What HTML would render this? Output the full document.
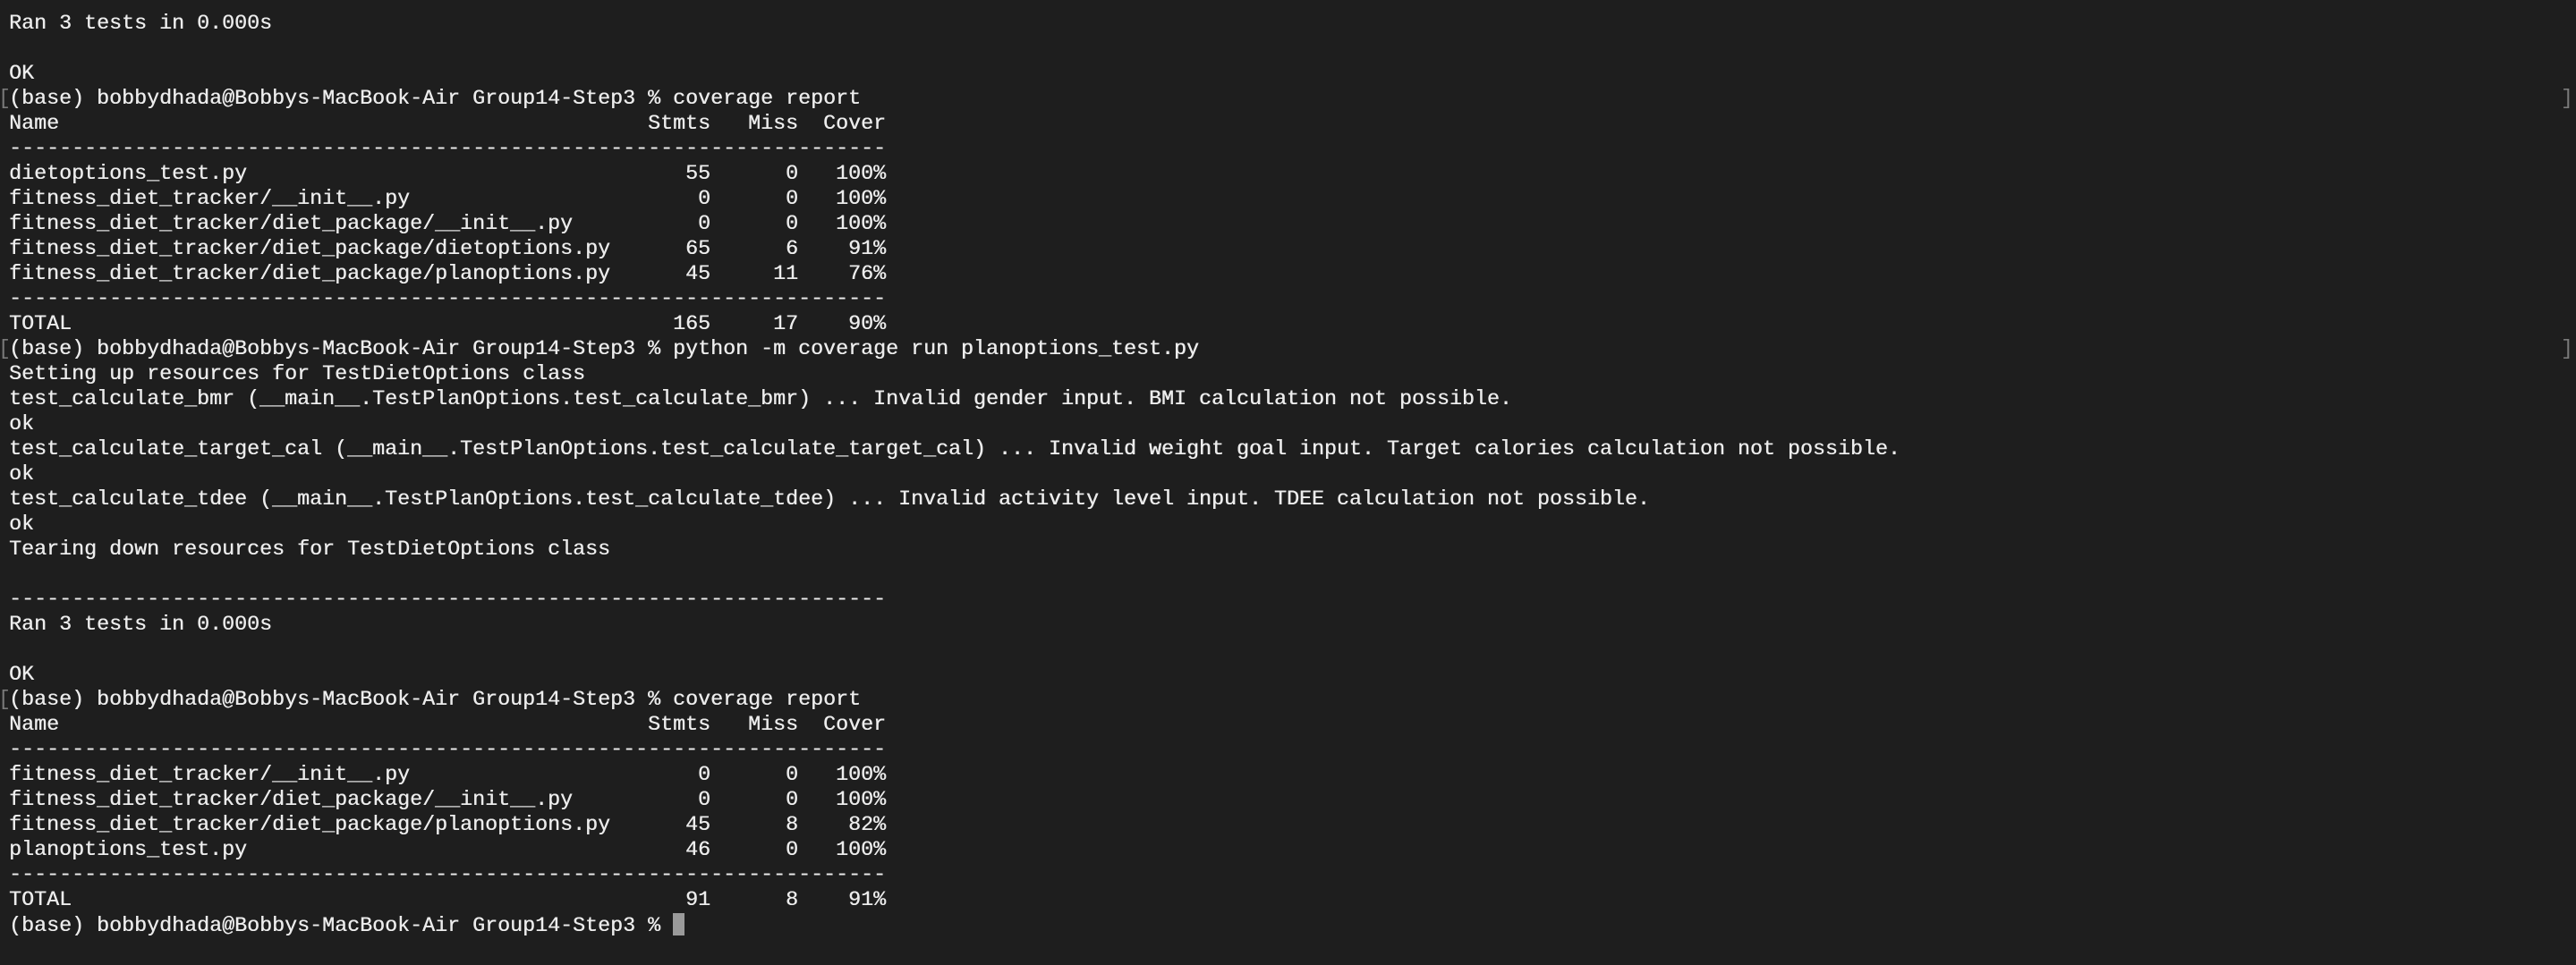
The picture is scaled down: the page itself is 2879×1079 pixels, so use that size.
<!DOCTYPE html>
<html><head><meta charset="utf-8"><style>
html,body{margin:0;padding:0;background:#1e1e1e;width:2879px;height:1079px;overflow:hidden}
pre{position:absolute;left:10px;top:13px;margin:0;font-family:"Liberation Mono",monospace;font-size:23.33px;line-height:28px;color:#ececec;letter-spacing:0;text-shadow:0.4px 0 0 #ececec}
.m{position:absolute;font-family:"Liberation Mono",monospace;font-size:23.33px;line-height:28px;color:#7a7a7a}
.cur{display:inline-block;width:13px;height:25px;background:#9a9a9a;vertical-align:-5px}
</style></head><body>
<div class="m" style="left:-2px;top:97px">[</div>
<div class="m" style="left:-2px;top:377px">[</div>
<div class="m" style="left:-2px;top:769px">[</div>
<div class="m" style="left:2862px;top:97px">]</div>
<div class="m" style="left:2862px;top:377px">]</div>
<pre>Ran 3 tests in 0.000s

OK
(base) bobbydhada@Bobbys-MacBook-Air Group14-Step3 % coverage report
Name                                               Stmts   Miss  Cover
----------------------------------------------------------------------
dietoptions_test.py                                   55      0   100%
fitness_diet_tracker/__init__.py                       0      0   100%
fitness_diet_tracker/diet_package/__init__.py          0      0   100%
fitness_diet_tracker/diet_package/dietoptions.py      65      6    91%
fitness_diet_tracker/diet_package/planoptions.py      45     11    76%
----------------------------------------------------------------------
TOTAL                                                165     17    90%
(base) bobbydhada@Bobbys-MacBook-Air Group14-Step3 % python -m coverage run planoptions_test.py
Setting up resources for TestDietOptions class
test_calculate_bmr (__main__.TestPlanOptions.test_calculate_bmr) ... Invalid gender input. BMI calculation not possible.
ok
test_calculate_target_cal (__main__.TestPlanOptions.test_calculate_target_cal) ... Invalid weight goal input. Target calories calculation not possible.
ok
test_calculate_tdee (__main__.TestPlanOptions.test_calculate_tdee) ... Invalid activity level input. TDEE calculation not possible.
ok
Tearing down resources for TestDietOptions class

----------------------------------------------------------------------
Ran 3 tests in 0.000s

OK
(base) bobbydhada@Bobbys-MacBook-Air Group14-Step3 % coverage report
Name                                               Stmts   Miss  Cover
----------------------------------------------------------------------
fitness_diet_tracker/__init__.py                       0      0   100%
fitness_diet_tracker/diet_package/__init__.py          0      0   100%
fitness_diet_tracker/diet_package/planoptions.py      45      8    82%
planoptions_test.py                                   46      0   100%
----------------------------------------------------------------------
TOTAL                                                 91      8    91%
(base) bobbydhada@Bobbys-MacBook-Air Group14-Step3 % <span class="cur"></span></pre>
</body></html>
